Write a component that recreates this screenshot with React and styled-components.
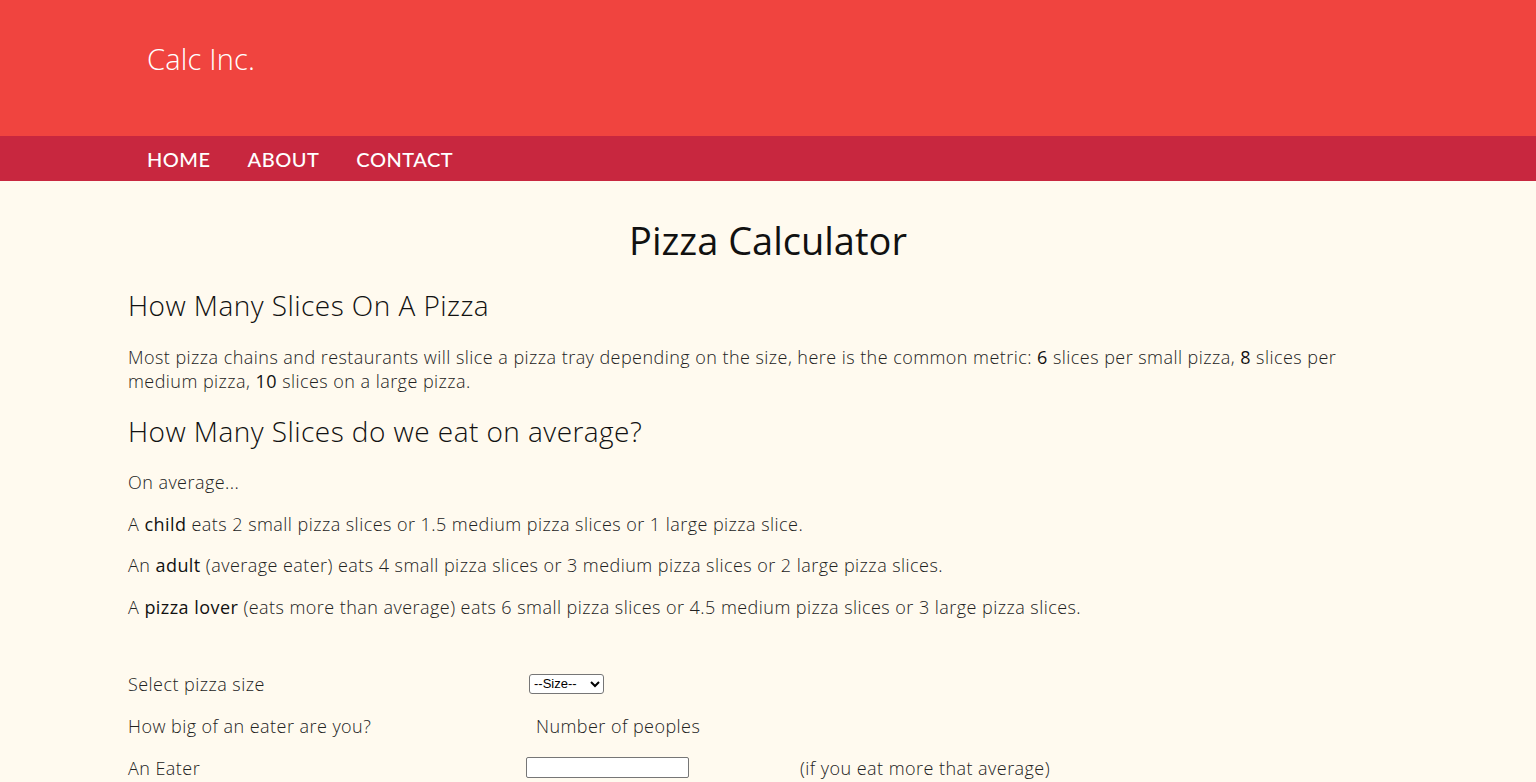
import styled, { createGlobalStyle } from "styled-components";

const Global = createGlobalStyle`
  html, body {
    margin: 0;
    padding: 0;
    background: #fffaef;
  }
  body {
    font-family: "Open Sans", Lato, sans-serif;
    color: #222;
  }
`;

export default function App() {
  const sizes = ["--Size--", "Small", "Medium", "Large"];
  return (
    <>
      <Global />
      <Header>
        <Brand>Calc Inc.</Brand>
      </Header>
      <Nav>
        <NavLink href="#">HOME</NavLink>
        <NavLink href="#">ABOUT</NavLink>
        <NavLink href="#">CONTACT</NavLink>
      </Nav>
      <Main>
        <Title>Pizza Calculator</Title>
        <SubHead>How Many Slices On A Pizza</SubHead>
        <Text $gap="22px">
          Most pizza chains and restaurants will slice a pizza tray depending on
          the size, here is the common metric: <b>6</b> slices per small pizza,{" "}
          <b>8</b> slices per medium pizza, <b>10</b> slices on a large pizza.
        </Text>
        <SubHead $tight>How Many Slices do we eat on average?</SubHead>
        <Text $gap="21px">On average...</Text>
        <Text>
          A <b>child</b> eats 2 small pizza slices or 1.5 medium pizza slices or
          1 large pizza slice.
        </Text>
        <Text>
          An <b>adult</b> (average eater) eats 4 small pizza slices or 3 medium
          pizza slices or 2 large pizza slices.
        </Text>
        <Text>
          A <b>pizza lover</b> (eats more than average) eats 6 small pizza
          slices or 4.5 medium pizza slices or 3 large pizza slices.
        </Text>

        <Form>
          <Label>Select pizza size</Label>
          <Cell>
            <Select defaultValue="--Size--">
              {sizes.map((s) => (
                <option key={s}>{s}</option>
              ))}
            </Select>
          </Cell>
          <Cell />

          <Label>How big of an eater are you?</Label>
          <Label $indent>Number of peoples</Label>
          <Cell />

          <Label>An Eater</Label>
          <Cell>
            <Input type="text" />
          </Cell>
          <Label>(if you eat more that average)</Label>
        </Form>
      </Main>
    </>
  );
}

const Header = styled.header`
  background: #f0443f;
  height: 136px;
  padding: 0 147px;
  display: flex;
  align-items: flex-start;
`;

const Brand = styled.h1`
  margin: 41px 0 0;
  font-family: "Open Sans", Lato, sans-serif;
  font-weight: 300;
  font-size: 29px;
  line-height: 36px;
  color: #fff;
  letter-spacing: 0.2px;
`;

const Nav = styled.nav`
  background: #c8273f;
  height: 45px;
  padding: 0 147px;
  display: flex;
  align-items: center;
  gap: 37px;
`;

const NavLink = styled.a`
  color: #fff;
  text-decoration: none;
  font-family: Lato, sans-serif;
  font-size: 20px;
  font-weight: 500;
  letter-spacing: 0.5px;
`;

const Main = styled.main`
  padding: 0 128px;
  max-width: 1220px;
`;

const Title = styled.h2`
  margin: 35px 0 0;
  text-align: center;
  font-family: "Open Sans", Lato, sans-serif;
  font-weight: 400;
  font-size: 38px;
  line-height: 48px;
  color: #111;
  letter-spacing: 0;
  margin-right: -60px;
`;

const SubHead = styled.h3`
  margin: ${(p) => (p.$tight ? "20px" : "23px")} 0 0;
  font-family: "Open Sans", Lato, sans-serif;
  font-weight: 300;
  font-size: 28px;
  line-height: 36px;
  color: #111;
  letter-spacing: 0.45px;
`;

const Text = styled.p`
  margin: ${(p) => p.$gap || "17.5px"} 0 0;
  font-size: 18px;
  line-height: 24px;
  font-weight: 300;
  color: #222;
  letter-spacing: 0.45px;
  b {
    font-weight: 500;
    color: #111;
  }
`;

const Form = styled.div`
  margin-top: 53px;
  display: grid;
  grid-template-columns: 398px 274px 1fr;
  row-gap: 18px;
  align-items: center;
`;

const Label = styled.div`
  font-size: 18px;
  line-height: 24px;
  font-weight: 300;
  color: #222;
  letter-spacing: 0.45px;
  padding-left: ${(p) => (p.$indent ? "10px" : "0")};
`;

const Cell = styled.div`
  display: flex;
  align-items: center;
`;

const Select = styled.select`
  margin-left: 3px;
  width: 75px;
  font-family: "Liberation Sans", Arial, sans-serif;
  font-size: 13px;
  height: 20px;
  background: #fff;
  border: 1px solid #767676;
  border-radius: 3px;
`;

const Input = styled.input`
  width: 157px;
  height: 17px;
  padding: 1px 2px;
  border: 1px solid #767676;
  border-radius: 2px;
  background: #fff;
`;
